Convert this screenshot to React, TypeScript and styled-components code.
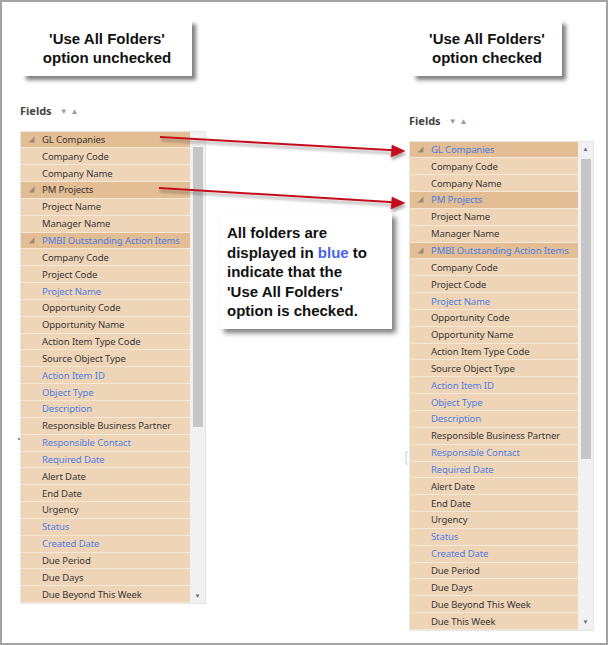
import styled, { createGlobalStyle } from "styled-components";

const GlobalStyle = createGlobalStyle`
  html, body {
    margin: 0;
    padding: 0;
    background: #ffffff;
  }
`;

interface Item {
  label: string;
  folder?: boolean;
  blue?: boolean;
}

const baseItems: Item[] = [
  { label: "GL Companies", folder: true },
  { label: "Company Code" },
  { label: "Company Name" },
  { label: "PM Projects", folder: true },
  { label: "Project Name" },
  { label: "Manager Name" },
  { label: "PMBI Outstanding Action Items", folder: true, blue: true },
  { label: "Company Code" },
  { label: "Project Code" },
  { label: "Project Name", blue: true },
  { label: "Opportunity Code" },
  { label: "Opportunity Name" },
  { label: "Action Item Type Code" },
  { label: "Source Object Type" },
  { label: "Action Item ID", blue: true },
  { label: "Object Type", blue: true },
  { label: "Description", blue: true },
  { label: "Responsible Business Partner" },
  { label: "Responsible Contact", blue: true },
  { label: "Required Date", blue: true },
  { label: "Alert Date" },
  { label: "End Date" },
  { label: "Urgency" },
  { label: "Status", blue: true },
  { label: "Created Date", blue: true },
  { label: "Due Period" },
  { label: "Due Days" },
  { label: "Due Beyond This Week" },
];

const uncheckedItems = baseItems;
const checkedItems: Item[] = [
  ...baseItems.map((i) => (i.folder ? { ...i, blue: true } : i)),
  { label: "Due This Week" },
];

const Frame = styled.div`
  position: relative;
  box-sizing: border-box;
  width: 608px;
  height: 645px;
  border: 2px solid #a3a3a3;
  display: grid;
  grid-template-columns: 186px 203px 185px;
  align-items: start;
  padding: 18px 0 0 18px;
  font-family: "Liberation Sans", Arial, sans-serif;
`;

const Column = styled.div`
  display: flex;
  flex-direction: column;
  align-items: flex-start;
`;

const MiddleColumn = styled.div`
  padding: 0 17px 0 14px;
`;

const Callout = styled.div<{ $width: number; $offset?: number }>`
  box-sizing: border-box;
  width: ${(p) => p.$width}px;
  margin-left: ${(p) => p.$offset ?? 0}px;
  background: #ffffff;
  box-shadow: 4px 4px 4px rgba(0, 0, 0, 0.5);
  padding: 9px 4px 9px;
  text-align: center;
  font-weight: bold;
  font-size: 15px;
  line-height: 19px;
  color: #111;
`;

const NoteBox = styled.div`
  box-sizing: border-box;
  margin-top: 193px;
  width: 172px;
  background: #ffffff;
  box-shadow: 4px 4px 5px rgba(0, 0, 0, 0.5);
  padding: 10px 4px 8px 7px;
  font-weight: bold;
  font-size: 15px;
  line-height: 19.5px;
  color: #111;
`;

const Blue = styled.span`
  color: #4a63ee;
`;

const FieldsLabel = styled.div<{ $top: number }>`
  margin-top: ${(p) => p.$top}px;
  margin-bottom: 11.5px;
  height: 16px;
  line-height: 16px;
  display: flex;
  align-items: center;
  gap: 8px;
  font-family: "Noto Sans", "Open Sans", sans-serif;
  font-size: 11px;
  font-weight: bold;
  color: #444;
`;

const SortArrows = styled.span`
  font-size: 8px;
  color: #9a9a9a;
  letter-spacing: 3px;
`;

const Panel = styled.div<{ $width: number }>`
  box-sizing: border-box;
  width: ${(p) => p.$width}px;
  display: flex;
  border: 1px solid #e6e6e6;
  background: #fbfbfb;
`;

const List = styled.div`
  flex: 1;
  display: flex;
  flex-direction: column;
`;

const Row = styled.div<{ $folder?: boolean; $blue?: boolean }>`
  box-sizing: border-box;
  height: 16.85px;
  display: flex;
  align-items: center;
  padding-left: ${(p) => (p.$folder ? 7 : 21)}px;
  gap: 7px;
  background: ${(p) => (p.$folder ? "#e3be95" : "#efd5b8")};
  border-bottom: 1px solid #f6e6d4;
  font-family: "Noto Sans", "Open Sans", sans-serif;
  font-size: 9.5px;
  letter-spacing: -0.1px;
  color: ${(p) => (p.$blue ? "#4f7de0" : "#3a3634")};
  white-space: nowrap;
  overflow: hidden;
`;

const Expander = styled.svg`
  flex: none;
  width: 7px;
  height: 7px;
`;

const ScrollBar = styled.div`
  width: 15px;
  display: flex;
  flex-direction: column;
  background: #f1f1f1;
`;

const ScrollButton = styled.div`
  height: 15px;
  display: flex;
  align-items: center;
  justify-content: center;
  font-size: 6px;
  color: #6a6a6a;
`;

const Track = styled.div`
  flex: 1;
  display: flex;
  justify-content: center;
`;

const Thumb = styled.div<{ $top: number; $len: number }>`
  margin-top: ${(p) => p.$top}px;
  width: 10px;
  height: ${(p) => p.$len}px;
  background: #c6c6c6;
`;

const Overlay = styled.svg`
  position: absolute;
  left: 0;
  top: 0;
  pointer-events: none;
`;

const FieldList = ({
  items,
  width,
  showUp,
  thumbTop,
  thumbLen,
}: {
  items: Item[];
  width: number;
  showUp: boolean;
  thumbTop: number;
  thumbLen: number;
}) => (
  <Panel $width={width}>
    <List>
      {items.map((item, i) => (
        <Row key={i} $folder={item.folder} $blue={item.blue}>
          {item.folder && (
            <Expander viewBox="0 0 7 7">
              <polygon points="6.5,0.5 6.5,6.5 0.5,6.5" fill="#9c8a78" />
            </Expander>
          )}
          {item.label}
        </Row>
      ))}
    </List>
    <ScrollBar>
      <ScrollButton>{showUp ? "▲" : ""}</ScrollButton>
      <Track>
        <Thumb $top={thumbTop} $len={thumbLen} />
      </Track>
      <ScrollButton>▼</ScrollButton>
    </ScrollBar>
  </Panel>
);

const Arrows = () => (
  <Overlay width="608" height="645" viewBox="0 0 608 645">
    <defs>
      <filter id="arrowShadow" x="-10%" y="-100%" width="120%" height="300%">
        <feDropShadow dx="1" dy="3" stdDeviation="1.5" floodColor="#000" floodOpacity="0.35" />
      </filter>
    </defs>
    <g filter="url(#arrowShadow)" fill="#c4101c" stroke="#c4101c">
      <line x1="158" y1="135" x2="392" y2="148.3" strokeWidth="2" />
      <polygon points="403,149 390,143 389,155" strokeWidth="0.5" />
      <line x1="157" y1="186" x2="392" y2="200.3" strokeWidth="2" />
      <polygon points="403,201 390,195 389,207" strokeWidth="0.5" />
    </g>
    <circle cx="17" cy="437" r="0.9" fill="#555" />
    <path d="M406 450 L404 450 L404 462 L406 462" stroke="#b9d0ea" strokeWidth="1" fill="none" />
  </Overlay>
);

export default function App() {
  return (
    <>
      <GlobalStyle />
      <Frame>
        <Column>
          <Callout $width={170} $offset={2}>
            'Use All Folders'
            <br />
            option unchecked
          </Callout>
          <FieldsLabel $top={27}>
            Fields <SortArrows>▼▲</SortArrows>
          </FieldsLabel>
          <FieldList items={uncheckedItems} width={186} showUp={false} thumbTop={0} thumbLen={280} />
        </Column>
        <MiddleColumn>
          <NoteBox>
            All folders are
            <br />
            displayed in <Blue>blue</Blue> to
            <br />
            indicate that the
            <br />
            'Use All Folders'
            <br />
            option is checked.
          </NoteBox>
        </MiddleColumn>
        <Column>
          <Callout $width={150} $offset={3}>
            'Use All Folders'
            <br />
            option checked
          </Callout>
          <FieldsLabel $top={37}>
            Fields <SortArrows>▼▲</SortArrows>
          </FieldsLabel>
          <FieldList items={checkedItems} width={185} showUp={true} thumbTop={2} thumbLen={300} />
        </Column>
        <Arrows />
      </Frame>
    </>
  );
}
